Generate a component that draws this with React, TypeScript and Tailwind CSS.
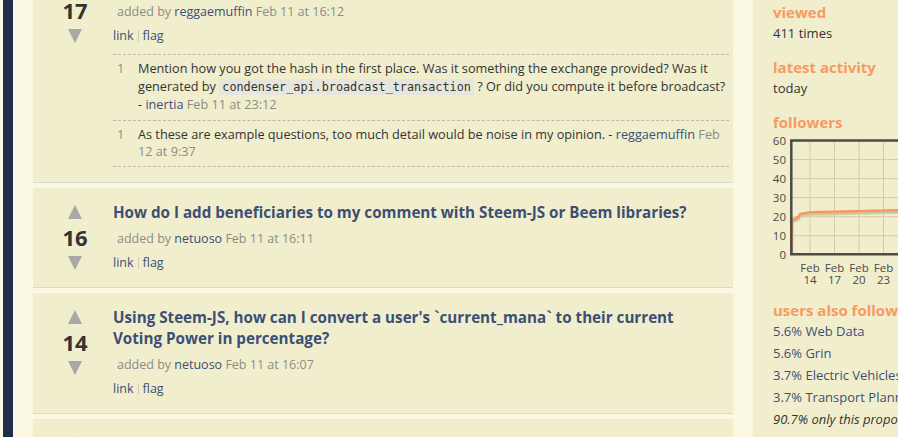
import { ReactNode } from 'react';

const font = { fontFamily: '"Open Sans", "Noto Sans", sans-serif' };

function UpArrow() {
    return (
        <svg width="14" height="14" viewBox="0 0 14 14" className="block">
            <polygon points="7,0 14,14 0,14" fill="#a8a8a6" />
        </svg>
    );
}

function DownArrow() {
    return (
        <svg width="14" height="14" viewBox="0 0 14 14" className="block">
            <polygon points="0,0 14,0 7,14" fill="#a8a8a6" />
        </svg>
    );
}

function Meta({ user, date }: { user: string; date: string }) {
    return (
        <div className="mt-[7px] pl-[4px] text-[12.5px] leading-[18px] text-[#8c8c86]">
            added by <span className="text-[#3c4f75]">{user}</span> {date}
        </div>
    );
}

function Links() {
    return (
        <div className="mt-[6px] flex items-center text-[12.5px] leading-[18px] text-[#3c4f75]">
            <span>link</span>
            <span className="mx-[4px] h-[12px] border-l border-[#c9c9c0]" />
            <span>flag</span>
        </div>
    );
}

function Card({ score, title, user, date, children }: { score: number; title: string; user: string; date: string; children?: ReactNode }) {
    return (
        <div className="mb-[5px] flex border-b border-[#d9d9d3] bg-[#f1eecd] pt-[14px] pr-[4px] pb-[15px]">
            <div className="flex w-[80px] shrink-0 flex-col items-center pt-[3px] pl-[4px]">
                <UpArrow />
                <div className="h-[37px] text-[22px] leading-[37px] font-bold text-[#333]">{score}</div>
                <DownArrow />
            </div>
            <div className="flex-1">
                <div className="pr-[14px] text-[15.2px] leading-[21px] font-bold text-[#3c4f75]">{title}</div>
                <Meta user={user} date={date} />
                <Links />
                {children}
            </div>
        </div>
    );
}

function Comment({ children, last }: { children: ReactNode; last?: boolean }) {
    return (
        <div className={`flex border-b border-dashed border-[#b9b9b2] pt-[5px] ${last ? 'pb-[5px]' : 'pb-[6px]'}`}>
            <div className="w-[25px] shrink-0 pl-[4px] text-[12.7px] leading-[17.5px] text-[#8c8c86]">1</div>
            <div className="flex-1 text-[12.7px] leading-[17.5px] text-[#333]">{children}</div>
        </div>
    );
}

function Chart() {
    const rows = [0, 1, 2, 3, 4, 5, 6];
    const labels = ['60', '50', '40', '30', '20', '10', '0'];
    const cols = [
        { x: 57, d: '14' },
        { x: 81.5, d: '17' },
        { x: 106, d: '20' },
        { x: 130.5, d: '23' },
    ];
    const line = 'M38.7,119.7 L39,88 L40.3,87.3 L45.3,85.3 L47,82 L57,80.3 L80,79.7 L145,78.3';
    return (
        <svg width="145" height="158" viewBox="0 0 145 158" className="-ml-[20px] block">
            {rows.slice(1, 6).map((r) => (
                <line key={r} x1="39" x2="145" y1={8.5 + r * 19.05} y2={8.5 + r * 19.05} stroke="#d3cba6" strokeWidth="1" />
            ))}
            {cols.map((c) => (
                <line key={c.x} x1={c.x} x2={c.x} y1="9" y2="122" stroke="#d3cba6" strokeWidth="1" />
            ))}
            <path d={line} fill="none" stroke="#cdc8a6" strokeWidth="3" transform="translate(0,2)" />
            <path d={line} fill="none" stroke="#f9985a" strokeWidth="2.5" strokeLinejoin="round" />
            <path d="M38.3,8.5 L145,8.5 M38.3,7.3 L38.3,123.4 M37,122.2 L145,122.2" fill="none" stroke="#4b4b48" strokeWidth="2.5" />
            {rows.map((r) => (
                <text key={r} x="33" y={8.5 + r * 19.05 + 4} textAnchor="end" fontSize="11.5" fill="#4a4a48" style={font}>
                    {labels[r]}
                </text>
            ))}
            {cols.map((c) => (
                <text key={c.d} x={c.x} textAnchor="middle" fontSize="11.5" fill="#4a4a48" style={font}>
                    <tspan x={c.x} y="139.5">Feb</tspan>
                    <tspan x={c.x} y="151.5">{c.d}</tspan>
                </text>
            ))}
        </svg>
    );
}

export default function App() {
    return (
        <div className="flex h-[437px] w-[898px] overflow-hidden bg-[#faf8e3]" style={font}>
            <div className="w-[3px] shrink-0" />
            <div className="w-[10px] shrink-0 bg-[#232e4b]" />
            <div className="w-[20px] shrink-0" />

            {/* questions */}
            <div className="-mt-[39px] flex w-[700px] shrink-0 flex-col">
                <Card score={17} title="How do I find a transaction by its hash?" user="reggaemuffin" date="Feb 11 at 16:12">
                    <div className="mt-[9px] border-t border-dashed border-[#b9b9b2]">
                        <Comment>
                            Mention how you got the hash in the first place. Was it something the exchange provided? Was it generated by{' '}
                            <code className="bg-[#e7e6dc] px-[3px] py-[1px] text-[11.8px] text-[#333]" style={{ fontFamily: '"DejaVu Sans Mono", monospace' }}>
                                condenser_api.broadcast_transaction
                            </code>{' '}
                            ? Or did you compute it before broadcast? - <span className="text-[#3c4f75]">inertia</span>{' '}
                            <span className="text-[#8c8c86]">Feb 11 at 23:12</span>
                        </Comment>
                        <Comment last>
                            As these are example questions, too much detail would be noise in my opinion. - <span className="text-[#3c4f75]">reggaemuffin</span>{' '}
                            <span className="text-[#8c8c86]">Feb 12 at 9:37</span>
                        </Comment>
                    </div>
                </Card>
                <Card score={16} title="How do I add beneficiaries to my comment with Steem-JS or Beem libraries?" user="netuoso" date="Feb 11 at 16:11" />
                <Card
                    score={14}
                    title="Using Steem-JS, how can I convert a user's `current_mana` to their current Voting Power in percentage?"
                    user="netuoso"
                    date="Feb 11 at 16:07"
                />
                <Card score={12} title="How do I calculate the resource credits cost of a transaction before I broadcast it?" user="netuoso" date="Feb 11 at 16:02" />
            </div>

            <div className="w-[20px] shrink-0" />

            {/* sidebar */}
            <div className="w-[145px] shrink-0 bg-[#f1eecd] pt-[2px] pl-[20px] whitespace-nowrap">
                <div className="text-[15px] leading-[20px] font-bold text-[#f89a5e]">viewed</div>
                <div className="text-[13px] leading-[22px] text-[#333]">411 times</div>
                <div className="mt-[13px] text-[15px] leading-[20px] font-bold text-[#f89a5e]">latest activity</div>
                <div className="text-[13px] leading-[22px] text-[#333]">today</div>
                <div className="mt-[13px] text-[15px] leading-[20px] font-bold text-[#f89a5e]">followers</div>
                <Chart />
                <div className="mt-[10px] text-[15px] leading-[20px] font-bold text-[#f89a5e]">users also following</div>
                <div className="text-[13px] leading-[22px] text-[#3c4f75]">
                    <div>5.6% Web Data</div>
                    <div>5.6% Grin</div>
                    <div>3.7% Electric Vehicles</div>
                    <div>3.7% Transport Planning</div>
                    <div className="text-[#333] italic">90.7% only this proposal</div>
                </div>
            </div>
        </div>
    );
}
